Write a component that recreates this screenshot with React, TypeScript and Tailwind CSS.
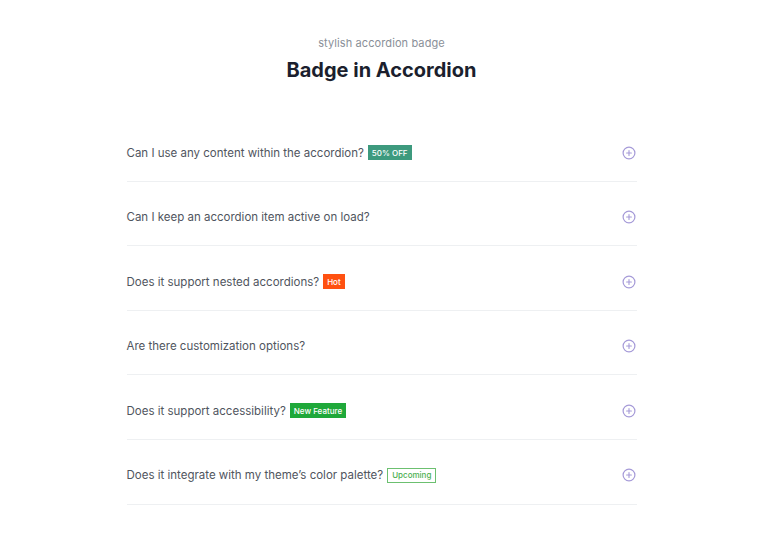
import React from "react";

type Badge = { text: string; cls: string } | null;

const items: { q: string; badge: Badge }[] = [
  { q: "Can I use any content within the accordion?", badge: { text: "50% OFF", cls: "bg-[#3d9a7e] text-white" } },
  { q: "Can I keep an accordion item active on load?", badge: null },
  { q: "Does it support nested accordions?", badge: { text: "Hot", cls: "bg-[#ff5111] text-white" } },
  { q: "Are there customization options?", badge: null },
  { q: "Does it support accessibility?", badge: { text: "New Feature", cls: "bg-[#1fa83a] text-white" } },
  { q: "Does it integrate with my theme\u2019s color palette?", badge: { text: "Upcoming", cls: "bg-white text-[#4caf50] border border-[#6cc070]" } },
];

function PlusCircle() {
  return (
    <svg width="14" height="14" viewBox="0 0 14 14" fill="none">
      <circle cx="7" cy="7" r="5.9" stroke="#a59ad8" strokeWidth="1.2" />
      <path d="M7 4.6v4.8M4.6 7h4.8" stroke="#a59ad8" strokeWidth="1.1" strokeLinecap="round" />
    </svg>
  );
}

export default function App() {
  return (
    <div className="min-h-[538px] w-full bg-white" style={{ fontFamily: "Inter, 'Open Sans', sans-serif" }}>
      <div className="flex justify-center pr-[5px]">
        <div className="w-[510px]">
          <div className="flex flex-col items-center pt-[36px]">
            <div className="text-[11px] leading-[14px] text-[#8a8f98] tracking-[0.1px]">stylish accordion badge</div>
            <div className="mt-[7px] text-[20px] leading-[26px] font-bold text-[#1b1f2e]">Badge in Accordion</div>
          </div>
          <div className="mt-[34px]">
            {items.map((it, i) => (
              <div key={i} className="flex items-center justify-between border-b border-[#eef0f2] pt-[27.5px] pb-[20.1px] pr-[1px]">
                <div className="flex items-center h-[16px]">
                  <span className="text-[11.5px] leading-[16px] text-[#50555e]">{it.q}</span>
                  {it.badge && (
                    <span className={`ml-[4px] inline-flex items-center h-[15px] px-[4px] text-[8px] leading-[8px] font-medium ${it.badge.cls}`}>
                      {it.badge.text}
                    </span>
                  )}
                </div>
                <PlusCircle />
              </div>
            ))}
          </div>
        </div>
      </div>
    </div>
  );
}
